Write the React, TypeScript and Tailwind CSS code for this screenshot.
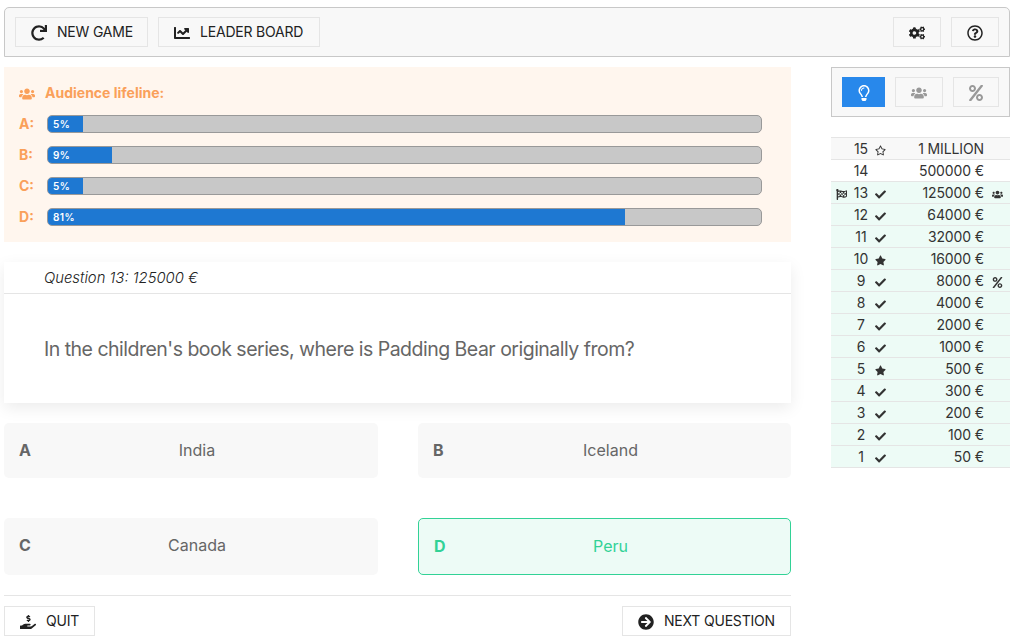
import React from "react";
import {
  FaRedo, FaChartLine, FaCogs, FaRegQuestionCircle, FaRegLightbulb, FaUsers, FaPercent,
  FaFlagCheckered, FaCheck, FaStar, FaRegStar, FaHandHoldingUsd, FaArrowCircleRight,
} from "react-icons/fa";

const votes = [
  { id: "A", value: 5 },
  { id: "B", value: 9 },
  { id: "C", value: 5 },
  { id: "D", value: 81 },
];

const prizes = [
  "50 €", "100 €", "200 €", "300 €", "500 €", "1000 €", "2000 €", "4000 €",
  "8000 €", "16000 €", "32000 €", "64000 €", "125000 €", "500000 €", "1 MILLION",
];

const CURRENT = 13;
const BAR_WIDTH = 713;

function Button({ className = "", children }: { className?: string; children: React.ReactNode }) {
  return (
    <button className={`flex h-[30px] items-center border border-[#e5e5e5] tracking-[-0.2px] whitespace-nowrap ${className}`}>
      {children}
    </button>
  );
}

function PrizeRow({ level }: { level: number }) {
  const done = level <= CURRENT;
  const milestone = level % 5 === 0;
  return (
    <div
      className={`flex h-[22px] items-center border-b border-[#e5e5e5] text-[#333] ${
        done ? "bg-[#edfbf6]" : milestone ? "bg-[#f8f8f8]" : ""
      }`}
    >
      <span className="flex w-5 pl-[5px] pt-[3px]">{level === CURRENT && <FaFlagCheckered size={11} />}</span>
      <span className="w-5 text-center leading-[21px]">{level}</span>
      <span className="flex w-5 pl-[4px] pt-[3px]">
        {milestone ? (done ? <FaStar size={11} /> : <FaRegStar size={11} />) : done && <FaCheck size={11} />}
      </span>
      <span className="flex-1 text-right leading-[21px] tracking-[-0.12px]">{prizes[level - 1]}</span>
      <span className="flex w-[26px] pl-[8px] pt-[3px]">
        {level === 13 && <FaUsers size={11} />}
        {level === 9 && <FaPercent size={11} />}
      </span>
    </div>
  );
}

function Answer({ id, text, className }: { id: string; text: string; className: string }) {
  return (
    <div className={`flex items-center rounded-[5px] px-[15px] text-base ${className}`}>
      <span className="w-3 font-bold">{id}</span>
      <span className="flex-1 text-center">{text}</span>
    </div>
  );
}

export default function App() {
  return (
    <div className="h-[643px] w-[1018px] overflow-hidden bg-white pl-1 pr-2 pt-[7px] font-['Inter',sans-serif] text-sm text-[#666] antialiased">
      <header className="flex h-[50px] items-center gap-[10px] rounded-t-[5px] border border-[#c8c8c8] bg-[#f8f8f8] px-[10px] text-[#222]">
        <Button className="w-[133px] gap-[10px] pl-[15px]"><FaRedo size={16} className="mt-[2px]" />NEW GAME</Button>
        <Button className="w-[162px] gap-[10px] pl-[15px]"><FaChartLine size={16} className="mt-[2px]" />LEADER BOARD</Button>
        <div className="flex-1" />
        <Button className="w-12 justify-center"><FaCogs size={16} className="mt-[2px]" /></Button>
        <Button className="w-12 justify-center"><FaRegQuestionCircle size={16} className="mt-[2px]" /></Button>
      </header>

      <div className="mt-[10px] flex gap-10">
        <main className="w-[787px]">
          <section className="h-[175px] bg-[#fff6ee] pl-[15px] pr-[29px] pt-[15px] font-bold text-[#faa05a]">
            <div className="flex h-[22px] items-center gap-[10px]">
              <FaUsers size={16} className="mt-[2px]" />Audience lifeline:
            </div>
            <div className="mt-[11px] flex flex-col gap-[13px]">
              {votes.map((v) => (
                <div key={v.id} className="flex h-[18px] items-center">
                  <span className="w-7">{v.id}:</span>
                  <div className="h-[18px] flex-1 overflow-hidden rounded-[5px] border border-[#999] bg-[#c8c8c8]">
                    <div
                      className="flex h-4 items-center bg-[#1e78d2] pl-[5px] pt-px text-[10px] font-semibold tracking-[0.4px] text-white"
                      style={{ width: Math.floor((BAR_WIDTH * v.value) / 100) }}
                    >
                      {v.value}%
                    </div>
                  </div>
                </div>
              ))}
            </div>
          </section>

          <section className="mt-5 h-[141px] bg-white shadow-[0_5px_15px_rgba(0,0,0,0.08)]">
            <div className="flex h-8 items-center border-b border-[#e5e5e5] pl-10 pt-[2px] text-[14.8px] font-light text-[#222] italic">
              Question 13: 125000 €
            </div>
            <p className="pl-10 pt-10 text-[19.5px] leading-[30px] tracking-[-0.51px]">
              In the children's book series, where is Padding Bear originally from?
            </p>
          </section>

          <section className="mt-5 grid grid-cols-[374px_373px] grid-rows-[55px_57px] gap-10">
            <Answer id="A" text="India" className="bg-[#f8f8f8] pb-[2px]" />
            <Answer id="B" text="Iceland" className="bg-[#f8f8f8] pb-[2px]" />
            <Answer id="C" text="Canada" className="bg-[#f8f8f8] pb-[4px]" />
            <Answer id="D" text="Peru" className="border border-[#32d296] bg-[#edfbf6] pb-[2px] text-[#32d296]" />
          </section>

          <footer className="mt-5 flex justify-between border-t border-[#e5e5e5] pt-[10px] text-[#222]">
            <Button className="w-[91px] gap-[10px] pl-[15px]"><FaHandHoldingUsd size={16} className="mt-[2px]" />QUIT</Button>
            <Button className="w-[169px] gap-[10px] pl-[15px]"><FaArrowCircleRight size={16} className="mt-[2px]" />NEXT QUESTION</Button>
          </footer>
        </main>

        <aside className="w-[179px]">
          <div className="flex h-[50px] items-center gap-[10px] border border-[#c8c8c8] bg-[#f8f8f8] px-[10px] text-[#999]">
            <button className="flex h-[30px] w-[43px] items-center justify-center bg-[#2888eb] text-white"><FaRegLightbulb size={16} className="mt-[2px]" /></button>
            <Button className="w-12 justify-center"><FaUsers size={16} className="mt-[2px]" /></Button>
            <Button className="w-[46px] justify-center"><FaPercent size={16} className="mt-[2px]" /></Button>
          </div>
          <div className="mt-5 border-t border-[#e5e5e5]">
            {prizes.map((_, i) => <PrizeRow key={i} level={prizes.length - i} />)}
          </div>
        </aside>
      </div>
    </div>
  );
}
